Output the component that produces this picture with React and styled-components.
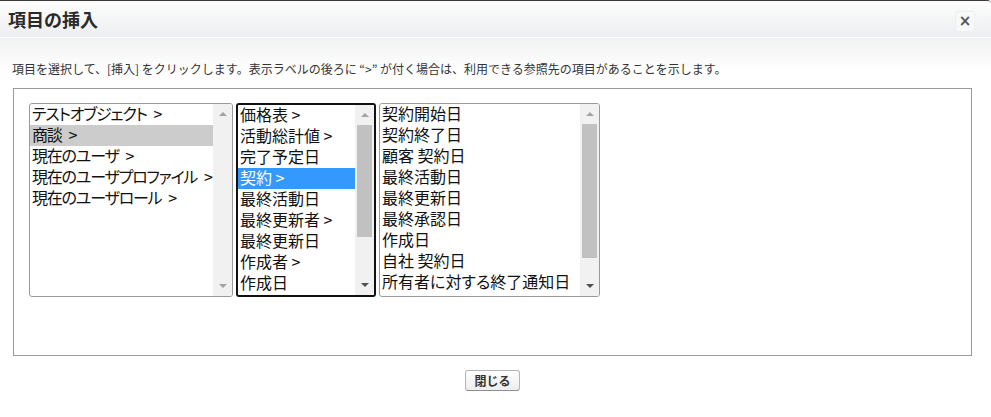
import React from 'react';
import styled, { createGlobalStyle } from 'styled-components';

const GlobalStyle = createGlobalStyle`
  html, body {
    margin: 0;
    padding: 0;
    background: #fff;
  }
  body {
    font-family: "Noto Sans CJK JP", "Liberation Sans", sans-serif;
    color: #333;
  }
`;

const Dialog = styled.div`
  width: 991px;
  height: 417px;
  box-sizing: border-box;
  border-top: 1px solid #3a3a3a;
  border-top-right-radius: 4px;
  background: linear-gradient(#f1f2f2 38px, #ffffff 70px);
  display: flex;
  flex-direction: column;
  overflow: hidden;
`;

const Header = styled.div`
  height: 37px;
  box-sizing: border-box;
  display: flex;
  align-items: center;
  justify-content: space-between;
  padding: 0 16px 0 8px;
  background: linear-gradient(#fdfdfd, #eceeef);
  border-bottom: 1px solid #ffffff;
`;

const Title = styled.h2`
  margin: 0;
  font-size: 18px;
  font-weight: 600;
  color: #2a2a2a;
`;

const CloseButton = styled.button`
  width: 20px;
  height: 21px;
  padding: 0;
  border: 1px solid #eef0f0;
  border-radius: 2px;
  background: #f7f8f8;
  color: #555;
  font-size: 15px;
  font-weight: bold;
  line-height: 17px;
  font-family: "DejaVu Sans", sans-serif;
  cursor: pointer;
  margin-top: 5px;
`;

const Body = styled.div`
  padding: 23px 19px 0 13px;
  display: flex;
  flex-direction: column;
`;

const Instructions = styled.p`
  margin: 0 0 11px -1px;
  font-size: 12px;
  line-height: 16px;
  color: #333;
  white-space: nowrap;
`;

const Panel = styled.div`
  height: 268px;
  box-sizing: border-box;
  border: 1px solid #999;
  padding: 14px 15px;
  display: flex;
  align-items: flex-start;
  gap: 3px;
`;

const ListBox = styled.div`
  width: ${p => p.w}px;
  height: 194px;
  box-sizing: border-box;
  border: ${p => (p.focused ? '2px solid #111' : '1px solid #9a9a9a')};
  border-radius: 3px;
  background: #fff;
  display: flex;
  overflow: hidden;
`;

const Items = styled.div`
  flex: 1;
  min-width: 0;
  overflow: hidden;
  padding-top: ${p => p.top}px;
`;

const Row = styled.div`
  height: 21px;
  box-sizing: border-box;
  padding: 1px 0 0 2px;
  line-height: 17px;
  font-size: 16px;
  white-space: nowrap;
  font-feature-settings: "palt";
  letter-spacing: ${p => (p.tight ? '-1.2px' : '0')};
  color: ${p => (p.sel === 'active' ? '#fff' : '#111')};
  background: ${p =>
    p.sel === 'active' ? '#3399ff' : p.sel === 'inactive' ? '#cccccc' : 'transparent'};
`;

const Scrollbar = styled.div`
  width: 19px;
  flex: none;
  background: #f1f1f1;
  display: flex;
  flex-direction: column;
`;

const Arrow = styled.div`
  height: 20px;
  flex: none;
  display: flex;
  align-items: center;
  justify-content: center;
  &::after {
    content: '';
    border-left: 4px solid transparent;
    border-right: 4px solid transparent;
    ${p =>
      p.down
        ? `border-top: 4px solid ${p.dark ? '#505050' : '#a3a3a3'};`
        : `border-bottom: 4px solid #a3a3a3;`}
  }
`;

const Track = styled.div`
  flex: 1;
  display: flex;
  flex-direction: column;
`;

const Thumb = styled.div`
  margin: 0 2px;
  height: ${p => p.h}px;
  background: #c1c1c1;
`;

const Footer = styled.div`
  display: flex;
  justify-content: center;
  padding: 14px 0 0 0;
`;

const Button = styled.button`
  height: 21px;
  box-sizing: border-box;
  padding: 0 8px;
  border: 1px solid #b5b5b5;
  border-bottom-color: #8f8f8f;
  border-radius: 3px;
  background: linear-gradient(#ffffff, #ededed);
  font-family: "Noto Sans CJK JP", sans-serif;
  font-size: 12px;
  font-weight: bold;
  color: #333;
  line-height: 17px;
`;

const lists = [
  {
    w: 204,
    top: 0,
    thumb: 0,
    tight: true,
    items: [
      { t: 'テストオブジェクト\u2002>' },
      { t: '商談\u2002>', sel: 'inactive' },
      { t: '現在のユーザ\u2002>' },
      { t: '現在のユーザプロファイル\u2002>' },
      { t: '現在のユーザロール\u2002>' },
    ],
  },
  {
    w: 140,
    top: -1,
    focused: true,
    thumb: 112,
    items: [
      { t: '価格表 >' },
      { t: '活動総計値 >' },
      { t: '完了予定日' },
      { t: '契約 >', sel: 'active' },
      { t: '最終活動日' },
      { t: '最終更新者 >' },
      { t: '最終更新日' },
      { t: '作成者 >' },
      { t: '作成日' },
    ],
  },
  {
    w: 221,
    top: -1,
    thumb: 134,
    items: [
      { t: '契約開始日' },
      { t: '契約終了日' },
      { t: '顧客 契約日' },
      { t: '最終活動日' },
      { t: '最終更新日' },
      { t: '最終承認日' },
      { t: '作成日' },
      { t: '自社 契約日' },
      { t: '所有者に対する終了通知日' },
    ],
  },
];

const App = () => (
  <>
    <GlobalStyle />
    <Dialog>
      <Header>
        <Title>項目の挿入</Title>
        <CloseButton aria-label="閉じる">×</CloseButton>
      </Header>
      <Body>
        <Instructions>
          項目を選択して、[挿入] をクリックします。表示ラベルの後ろに “&gt;” が付く場合は、利用できる参照先の項目があることを示します。
        </Instructions>
        <Panel>
          {lists.map((l, i) => (
            <ListBox key={`list-${i}`} w={l.w} focused={l.focused}>
              <Items top={l.top}>
                {l.items.map((it, j) => (
                  <Row key={`row-${i}-${j}`} sel={it.sel} tight={l.tight}>
                    {it.t}
                  </Row>
                ))}
              </Items>
              <Scrollbar>
                <Arrow />
                <Track>
                  {l.thumb > 0 && <Thumb h={l.thumb} />}
                </Track>
                <Arrow down dark={l.thumb > 0} />
              </Scrollbar>
            </ListBox>
          ))}
        </Panel>
        <Footer>
          <Button>閉じる</Button>
        </Footer>
      </Body>
    </Dialog>
  </>
);

export default App;
